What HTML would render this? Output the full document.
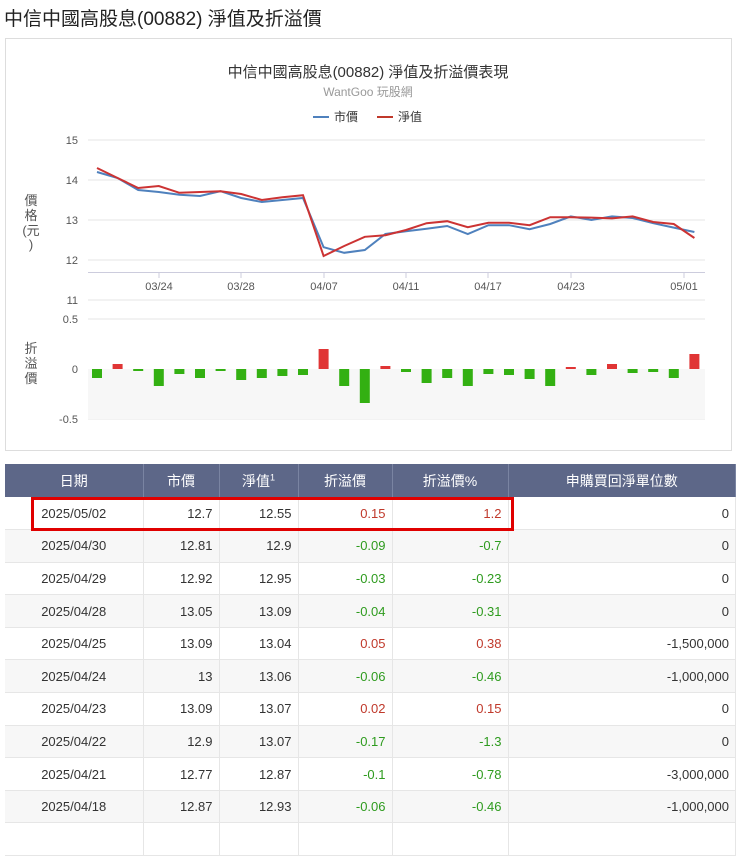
<!DOCTYPE html>
<html><head><meta charset="utf-8"><style>
*{margin:0;padding:0;box-sizing:border-box}
body{width:737px;height:834px;overflow:hidden;background:#fff;font-family:"Liberation Sans","Noto Sans CJK TC",sans-serif;position:relative}
h1{position:absolute;left:4px;top:4px;font-size:19px;font-weight:normal;color:#222}
table{position:absolute;left:5px;top:464px;width:731px;border-collapse:collapse;font-size:13px;color:#333}
th{background:#5d6788;color:#fff;font-weight:normal;height:33px;border-right:1px solid #7a84a2;font-size:14px}
td{height:32.6px;text-align:right;padding-right:6px;border-right:1px solid #e6e6e6;border-bottom:1px solid #e6e6e6}
td:first-child{text-align:center;padding-right:0}
tr:nth-child(odd) td{background:#f7f7f7}
.r{color:#c0392b}.g{color:#2e9b1e}
.box{position:absolute;left:31px;top:497px;width:483px;height:34px;border:3px solid #e00000}
</style></head><body>
<h1>中信中國高股息(00882) 淨值及折溢價</h1>
<svg style="position:absolute;left:0;top:0" width="737" height="460" font-family="Liberation Sans,Noto Sans CJK TC,sans-serif">
<rect x="5.5" y="38.5" width="726" height="412" fill="none" stroke="#ddd"/>
<text x="368" y="77" text-anchor="middle" font-size="15" fill="#333">中信中國高股息(00882) 淨值及折溢價表現</text>
<text x="368" y="96" text-anchor="middle" font-size="12" fill="#999">WantGoo 玩股網</text>
<line x1="313" y1="117" x2="329" y2="117" stroke="#4f81bd" stroke-width="2"/><text x="334" y="121" font-size="12" fill="#333">市價</text>
<line x1="377" y1="117" x2="393" y2="117" stroke="#c0392b" stroke-width="2"/><text x="398" y="121" font-size="12" fill="#333">淨值</text>
<g stroke="#e6e6e6"><line x1="88" y1="140" x2="705" y2="140"/><line x1="88" y1="180" x2="705" y2="180"/><line x1="88" y1="220" x2="705" y2="220"/><line x1="88" y1="260" x2="705" y2="260"/><line x1="88" y1="300" x2="705" y2="300"/><line x1="88" y1="319" x2="705" y2="319"/><line x1="88" y1="419" x2="705" y2="419"/></g>
<line x1="88" y1="272.5" x2="705" y2="272.5" stroke="#ccd"/>
<g stroke="#ccd"><line x1="159" y1="272" x2="159" y2="278"/><line x1="241" y1="272" x2="241" y2="278"/><line x1="324" y1="272" x2="324" y2="278"/><line x1="406" y1="272" x2="406" y2="278"/><line x1="488" y1="272" x2="488" y2="278"/><line x1="571" y1="272" x2="571" y2="278"/><line x1="684" y1="272" x2="684" y2="278"/></g>
<g font-size="11" fill="#555" text-anchor="end"><text x="78" y="144">15</text><text x="78" y="184">14</text><text x="78" y="224">13</text><text x="78" y="264">12</text><text x="78" y="304">11</text><text x="78" y="323">0.5</text><text x="78" y="373">0</text><text x="78" y="423">-0.5</text></g>
<g font-size="11" fill="#555" text-anchor="middle"><text x="159" y="290">03/24</text><text x="241" y="290">03/28</text><text x="324" y="290">04/07</text><text x="406" y="290">04/11</text><text x="488" y="290">04/17</text><text x="571" y="290">04/23</text><text x="684" y="290">05/01</text></g>
<g font-size="13" fill="#555" text-anchor="middle"><text x="31" y="205">價</text><text x="31" y="220">格</text><text x="31" y="235">(元</text><text x="31" y="249">)</text>
<text x="31" y="353">折</text><text x="31" y="368">溢</text><text x="31" y="383">價</text></g>
<rect x="88" y="369" width="617" height="50" fill="#f7f7f7"/>
<polyline fill="none" stroke="#4f81bd" stroke-width="2" points="97,172 117.6,178 138.2,190 158.8,192 179.4,194.8 200,196 220.6,191.2 241.2,198 261.8,202 282.4,200 303,198 323.6,247.2 344.2,252.8 364.8,250 385.4,234 406,231.2 426.6,228.8 447.2,226 467.8,234 488.4,225.2 509,225.2 529.6,229.2 550.2,224 570.8,216.4 591.4,220 612,216.4 632.6,218 653.2,223.2 673.8,227.6 694.4,232"/>
<polyline fill="none" stroke="#cc3333" stroke-width="2" points="97,168 117.6,178 138.2,188 158.8,186 179.4,192.8 200,192 220.6,191.2 241.2,194 261.8,200 282.4,197.2 303,195.2 323.6,256 344.2,246 364.8,236.8 385.4,235.2 406,230 426.6,223.2 447.2,221.2 467.8,227.2 488.4,222.8 509,222.8 529.6,225.2 550.2,217.2 570.8,217.2 591.4,217.6 612,218.4 632.6,216.4 653.2,222 673.8,224 694.4,238"/>
<g fill="#33b012">
<rect x="92" y="369" width="10" height="9"/><rect x="133.2" y="369" width="10" height="2"/><rect x="153.8" y="369" width="10" height="17"/><rect x="174.4" y="369" width="10" height="5"/><rect x="195" y="369" width="10" height="9"/><rect x="215.6" y="369" width="10" height="2"/><rect x="236.2" y="369" width="10" height="11"/><rect x="256.8" y="369" width="10" height="9"/><rect x="277.4" y="369" width="10" height="7"/><rect x="298" y="369" width="10" height="6"/><rect x="339.2" y="369" width="10" height="17"/><rect x="359.8" y="369" width="10" height="34"/><rect x="401" y="369" width="10" height="3"/><rect x="421.6" y="369" width="10" height="14"/><rect x="442.2" y="369" width="10" height="9"/><rect x="462.8" y="369" width="10" height="17"/><rect x="483.4" y="369" width="10" height="5"/><rect x="504" y="369" width="10" height="6"/><rect x="524.6" y="369" width="10" height="10"/><rect x="545.2" y="369" width="10" height="17"/><rect x="586.4" y="369" width="10" height="6"/><rect x="627.6" y="369" width="10" height="4"/><rect x="648.2" y="369" width="10" height="3"/><rect x="668.8" y="369" width="10" height="9"/></g>
<g fill="#e03535"><rect x="112.6" y="364" width="10" height="5"/><rect x="318.6" y="349" width="10" height="20"/><rect x="380.4" y="366" width="10" height="3"/><rect x="565.8" y="367" width="10" height="2"/><rect x="607" y="364" width="10" height="5"/><rect x="689.4" y="354" width="10" height="15"/></g>
</svg>
<table>
<tr><th style="width:138px">日期</th><th style="width:76px">市價</th><th style="width:79px">淨值<sup style="font-size:9px">1</sup></th><th style="width:94px">折溢價</th><th style="width:116px">折溢價%</th><th>申購買回淨單位數</th></tr>
<tr><td>2025/05/02</td><td>12.7</td><td>12.55</td><td class="r">0.15</td><td class="r">1.2</td><td>0</td></tr>
<tr><td>2025/04/30</td><td>12.81</td><td>12.9</td><td class="g">-0.09</td><td class="g">-0.7</td><td>0</td></tr>
<tr><td>2025/04/29</td><td>12.92</td><td>12.95</td><td class="g">-0.03</td><td class="g">-0.23</td><td>0</td></tr>
<tr><td>2025/04/28</td><td>13.05</td><td>13.09</td><td class="g">-0.04</td><td class="g">-0.31</td><td>0</td></tr>
<tr><td>2025/04/25</td><td>13.09</td><td>13.04</td><td class="r">0.05</td><td class="r">0.38</td><td>-1,500,000</td></tr>
<tr><td>2025/04/24</td><td>13</td><td>13.06</td><td class="g">-0.06</td><td class="g">-0.46</td><td>-1,000,000</td></tr>
<tr><td>2025/04/23</td><td>13.09</td><td>13.07</td><td class="r">0.02</td><td class="r">0.15</td><td>0</td></tr>
<tr><td>2025/04/22</td><td>12.9</td><td>13.07</td><td class="g">-0.17</td><td class="g">-1.3</td><td>0</td></tr>
<tr><td>2025/04/21</td><td>12.77</td><td>12.87</td><td class="g">-0.1</td><td class="g">-0.78</td><td>-3,000,000</td></tr>
<tr><td>2025/04/18</td><td>12.87</td><td>12.93</td><td class="g">-0.06</td><td class="g">-0.46</td><td>-1,000,000</td></tr>
<tr><td>&nbsp;</td><td></td><td></td><td></td><td></td><td></td></tr>
</table>
<div class="box"></div>
</body></html>
